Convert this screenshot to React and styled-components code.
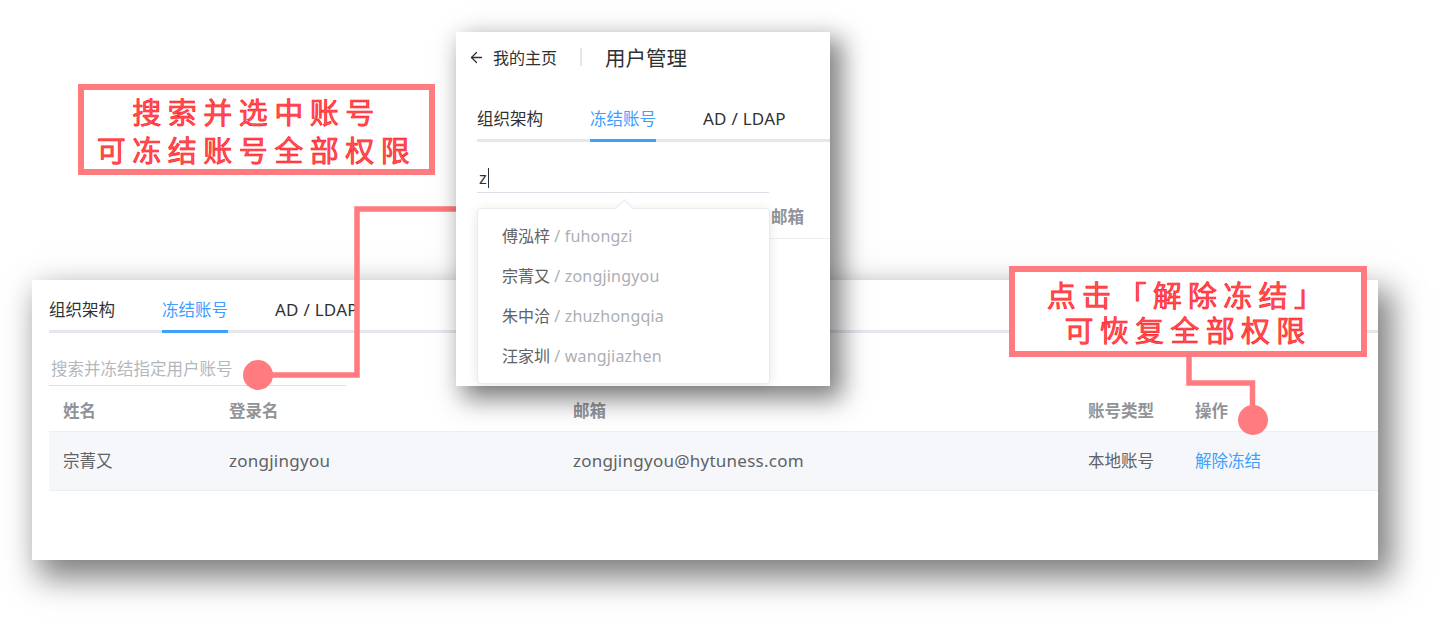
import React from "react";
import styled, { createGlobalStyle } from "styled-components";
import { ArrowLeft } from "lucide-react";

const Global = createGlobalStyle`
  html, body { margin: 0; padding: 0; background: #ffffff; }
  body { font-family: "Noto Sans", "Noto Sans CJK SC", sans-serif; }
  #root { width: 1443px; height: 625px; }
  * { box-sizing: border-box; }
`;

const ACCENT = "#ff7b7f";
const BLUE = "#409eff";

const Canvas = styled.div`
  position: relative;
  width: 1443px;
  height: 625px;
  overflow: hidden;
  background: #ffffff;
`;

/* latin-only text is set a little larger/wider, like the original UI font */
const Latin = styled.span`
  font-size: 17px;
  letter-spacing: 0.25px;
`;

/* ---------- shared pieces ---------- */
const TabBar = styled.div`
  display: flex;
  gap: ${(p) => p.$gap}px;
  border-bottom: 3px solid #e4e7ed;
  margin-top: ${(p) => p.$top}px;
`;

const Tab = styled.div`
  font-size: 16.5px;
  line-height: 24px;
  padding-bottom: 8px;
  margin-bottom: -3px;
  color: ${(p) => (p.$active ? BLUE : "#303133")};
  border-bottom: 3px solid ${(p) => (p.$active ? BLUE : "transparent")};
`;

/* ---------- big back panel ---------- */
const BigPanel = styled.section`
  position: absolute;
  left: 32px;
  top: 280px;
  width: 1346px;
  height: 280px;
  background: #ffffff;
  padding-left: 17px;
  box-shadow: 10px 14px 30px 4px rgba(0, 0, 0, 0.5);
  z-index: 1;
  display: flex;
  flex-direction: column;
`;

const SearchField = styled.div`
  width: ${(p) => p.$width}px;
  margin-top: ${(p) => p.$top}px;
  padding: 0 2px ${(p) => p.$pb}px;
  border-bottom: 1px solid #dcdfe6;
  font-size: 16.5px;
  line-height: 24px;
  color: ${(p) => (p.$placeholder ? "#b4b7bd" : "#303133")};
  display: flex;
  align-items: center;
`;

const Caret = styled.span`
  display: inline-block;
  width: 1px;
  height: 20px;
  background: #303133;
  margin-left: 1px;
`;

const TableRow = styled.div`
  display: grid;
  grid-template-columns: ${(p) => p.$cols};
  align-items: center;
  background: ${(p) => (p.$shaded ? "#f5f7fa" : "transparent")};
  border-bottom: 1px solid #ebeef5;
  padding: ${(p) => p.$pad};
`;

const HeadCell = styled.div`
  padding-left: 14px;
  font-size: 16.5px;
  line-height: 24px;
  font-weight: 700;
  color: #909399;
  white-space: nowrap;
`;

const Cell = styled.div`
  padding-left: 14px;
  font-size: 16.5px;
  line-height: 24px;
  color: ${(p) => (p.$link ? BLUE : "#606266")};
  white-space: nowrap;
`;

/* ---------- small front panel ---------- */
const SmallPanel = styled.section`
  position: absolute;
  left: 456px;
  top: 32px;
  width: 374px;
  height: 354px;
  background: #ffffff;
  padding-left: 21px;
  box-shadow: 9px 10px 24px 3px rgba(0, 0, 0, 0.5);
  z-index: 3;
  display: flex;
  flex-direction: column;
`;

const PageHeader = styled.header`
  display: flex;
  align-items: center;
  height: 50px;
  margin-left: -9px;
  color: #303133;
`;

const BackLink = styled.div`
  display: flex;
  align-items: center;
  gap: 8px;
  font-size: 16px;
`;

const Divider = styled.span`
  width: 2px;
  height: 18px;
  background: #e6e6e6;
  margin: 0 23px;
`;

const PageTitle = styled.h1`
  margin: 0;
  font-size: 20.5px;
  font-weight: 400;
  color: #303133;
`;

const Dropdown = styled.ul`
  position: absolute;
  left: 21px;
  top: 176px;
  width: 293px;
  margin: 0;
  padding: 7px 0 7px 24px;
  list-style: none;
  background: #ffffff;
  border: 1px solid #e9ebef;
  border-radius: 4px;
  box-shadow: 0 2px 12px rgba(0, 0, 0, 0.1);

  &::before {
    content: "";
    position: absolute;
    left: 140px;
    top: -7px;
    width: 12px;
    height: 12px;
    background: #ffffff;
    border-left: 1px solid #e9ebef;
    border-top: 1px solid #e9ebef;
    transform: rotate(45deg);
  }
`;

const Option = styled.li`
  position: relative;
  font-size: 16px;
  line-height: 40px;
  color: #606266;
`;

const Pinyin = styled.span`
  color: #acafb5;
  letter-spacing: 0.2px;
`;

/* ---------- annotations ---------- */
const Callout = styled.div`
  position: absolute;
  left: ${(p) => p.$x}px;
  top: ${(p) => p.$y}px;
  width: ${(p) => p.$w}px;
  height: 91px;
  border: 6px solid ${ACCENT};
  background: #ffffff;
  z-index: 5;
  display: flex;
  flex-direction: column;
  justify-content: center;
  align-items: center;
  font-family: "Noto Sans CJK SC", sans-serif;
  font-size: ${(p) => p.$size}px;
  font-weight: 400;
  line-height: ${(p) => p.$lh}px;
  letter-spacing: ${(p) => p.$ls}px;
  color: #ff5258;
  -webkit-text-stroke: 0.7px #ff1a22;
  text-align: center;
`;

const CalloutLine = styled.div`
  height: ${(p) => p.$h}px;
  white-space: nowrap;
`;

const Connectors = styled.svg`
  position: absolute;
  left: 0;
  top: 0;
  width: 1443px;
  height: 625px;
  pointer-events: none;
  z-index: ${(p) => p.$z};
`;

const bigCols = "166px 344px 515px 107px 1fr";
const smallCols = "166px 114px 1fr";

const options = [
  ["傅泓梓", "fuhongzi"],
  ["宗菁又", "zongjingyou"],
  ["朱中洽", "zhuzhongqia"],
  ["汪家圳", "wangjiazhen"],
];

export default function App() {
  return (
    <Canvas>
      <Global />

      <BigPanel>
        <TabBar $gap={47} $top={18}>
          <Tab>组织架构</Tab>
          <Tab $active>冻结账号</Tab>
          <Tab>
            <Latin>AD / LDAP</Latin>
          </Tab>
        </TabBar>
        <SearchField $width={297} $top={24} $pb={4} $placeholder>
          搜索并冻结指定用户账号
        </SearchField>
        <TableRow $cols={bigCols} $pad="13px 0 8px">
          <HeadCell>姓名</HeadCell>
          <HeadCell>登录名</HeadCell>
          <HeadCell>邮箱</HeadCell>
          <HeadCell>账号类型</HeadCell>
          <HeadCell>操作</HeadCell>
        </TableRow>
        <TableRow $cols={bigCols} $pad="17px 0" $shaded>
          <Cell>宗菁又</Cell>
          <Cell>
            <Latin>zongjingyou</Latin>
          </Cell>
          <Cell>
            <Latin>zongjingyou@hytuness.com</Latin>
          </Cell>
          <Cell>本地账号</Cell>
          <Cell $link>解除冻结</Cell>
        </TableRow>
      </BigPanel>

      <Connectors $z={2} viewBox="0 0 1443 625">
        <polyline
          points="258,375 357,375 357,209 470,209"
          fill="none"
          stroke={ACCENT}
          strokeWidth="5.5"
        />
        <circle cx="258" cy="375" r="15" fill={ACCENT} />
        <polyline
          points="1189,350 1189,383 1252.5,383 1252.5,420"
          fill="none"
          stroke={ACCENT}
          strokeWidth="5.5"
        />
        <circle cx="1253" cy="420" r="15" fill={ACCENT} />
      </Connectors>

      <SmallPanel>
        <PageHeader>
          <BackLink>
            <ArrowLeft size={17} strokeWidth={1.8} />
            我的主页
          </BackLink>
          <Divider />
          <PageTitle>用户管理</PageTitle>
        </PageHeader>
        <TabBar $gap={47} $top={25}>
          <Tab>组织架构</Tab>
          <Tab $active>冻结账号</Tab>
          <Tab>
            <Latin>AD / LDAP</Latin>
          </Tab>
        </TabBar>
        <SearchField $width={292} $top={24} $pb={2}>
          z<Caret />
        </SearchField>
        <TableRow $cols={smallCols} $pad="12px 0 9px">
          <HeadCell>姓名</HeadCell>
          <HeadCell>登录名</HeadCell>
          <HeadCell>邮箱</HeadCell>
        </TableRow>
        <Dropdown>
          {options.map(([name, py]) => (
            <Option key={py}>
              {name} <Pinyin>/ {py}</Pinyin>
            </Option>
          ))}
        </Dropdown>
      </SmallPanel>

      <Callout $x={78} $y={84} $w={357} $size={29} $lh={38} $ls={6.5}>
        <CalloutLine $h={38}>搜索并选中账号</CalloutLine>
        <CalloutLine $h={38}>可冻结账号全部权限</CalloutLine>
      </Callout>
      <Callout $x={1009} $y={266} $w={358} $size={29} $lh={35} $ls={6.3}>
        <CalloutLine $h={35}>点击「解除冻结」</CalloutLine>
        <CalloutLine $h={35}>可恢复全部权限</CalloutLine>
      </Callout>
    </Canvas>
  );
}
